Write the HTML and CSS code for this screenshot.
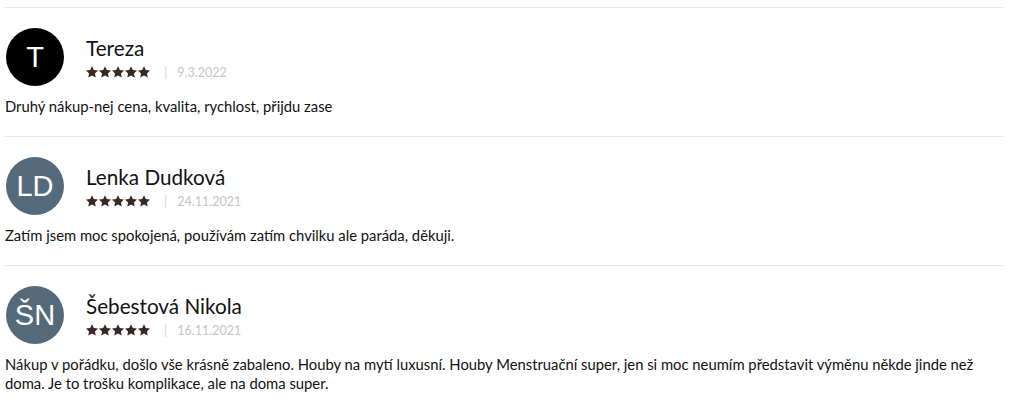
FILE: index.html
```html
<!DOCTYPE html>
<html lang="cs">
<head>
<meta charset="utf-8">
<link rel="stylesheet" href="styles.css">
</head>
<body>
<div class="reviews">
  <div class="review">
    <div class="head">
      <div class="avatar black">T</div>
      <div class="meta">
        <div class="name">Tereza</div>
        <div class="sub"><svg class="stars" viewBox="0 0 64 12" width="64" height="12"><use href="#s" x="0"/><use href="#s" x="13"/><use href="#s" x="26"/><use href="#s" x="39"/><use href="#s" x="52"/></svg><span class="sep">|</span><span class="date">9.3.2022</span></div>
      </div>
    </div>
    <p class="text">Druhý nákup-nej cena, kvalita, rychlost, přijdu zase</p>
  </div>
  <div class="review">
    <div class="head">
      <div class="avatar slate">LD</div>
      <div class="meta">
        <div class="name">Lenka Dudková</div>
        <div class="sub"><svg class="stars" viewBox="0 0 64 12" width="64" height="12"><use href="#s" x="0"/><use href="#s" x="13"/><use href="#s" x="26"/><use href="#s" x="39"/><use href="#s" x="52"/></svg><span class="sep">|</span><span class="date">24.11.2021</span></div>
      </div>
    </div>
    <p class="text">Zatím jsem moc spokojená, používám zatím chvilku ale paráda, děkuji.</p>
  </div>
  <div class="review">
    <div class="head">
      <div class="avatar slate">ŠN</div>
      <div class="meta">
        <div class="name">Šebestová Nikola</div>
        <div class="sub"><svg class="stars" viewBox="0 0 64 12" width="64" height="12"><use href="#s" x="0"/><use href="#s" x="13"/><use href="#s" x="26"/><use href="#s" x="39"/><use href="#s" x="52"/></svg><span class="sep">|</span><span class="date">16.11.2021</span></div>
      </div>
    </div>
    <p class="text">Nákup v pořádku, došlo vše krásně zabaleno. Houby na mytí luxusní. Houby Menstruační super, jen si moc neumím představit výměnu někde jinde než doma. Je to trošku komplikace, ale na doma super.</p>
  </div>
</div>
<svg width="0" height="0" class="defs">
  <defs>
    <path id="s" d="M6 0.2 L7.82 3.99 L11.99 4.55 L8.95 7.46 L9.7 11.6 L6 9.6 L2.3 11.6 L3.05 7.46 L0.01 4.55 L4.18 3.99 Z" fill="#3a2922"/>
  </defs>
</svg>
</body>
</html>
```
FILE: styles.css
```css
html, body {
  margin: 0;
  padding: 0;
  background: #fff;
}
body {
  font-family: Lato, "Open Sans", "Liberation Sans", sans-serif;
  color: #111;
}
.defs {
  position: absolute;
}
.reviews {
  padding: 7px 6px 0 5px;
}
.review {
  border-top: 1px solid #e6e6e6;
  padding: 20px 0 20px;
}
.head {
  display: flex;
  align-items: flex-start;
  gap: 22px;
  padding-left: 1px;
}
.avatar {
  width: 58px;
  height: 58px;
  border-radius: 50%;
  color: #fff;
  display: flex;
  align-items: center;
  justify-content: center;
  font-family: "Liberation Sans", Arial, sans-serif;
  font-size: 29px;
  flex-shrink: 0;
}
.avatar.black { background: #000; }
.avatar.slate { background: #546a7b; }
.meta {
  display: flex;
  flex-direction: column;
  padding-top: 8px;
  gap: 2px;
}
.name {
  font-size: 20.7px;
  line-height: 24px;
  color: #111;
}
.sub {
  display: flex;
  align-items: center;
  height: 20px;
}
.stars {
  display: block;
}
.sep {
  color: #d6d6d6;
  font-size: 13px;
  margin: 0 10px 0 14px;
}
.date {
  color: #c6c6c6;
  font-size: 12.5px;
}
.text {
  margin: 11px 0 0;
  font-size: 14.8px;
  line-height: 19px;
}
```
